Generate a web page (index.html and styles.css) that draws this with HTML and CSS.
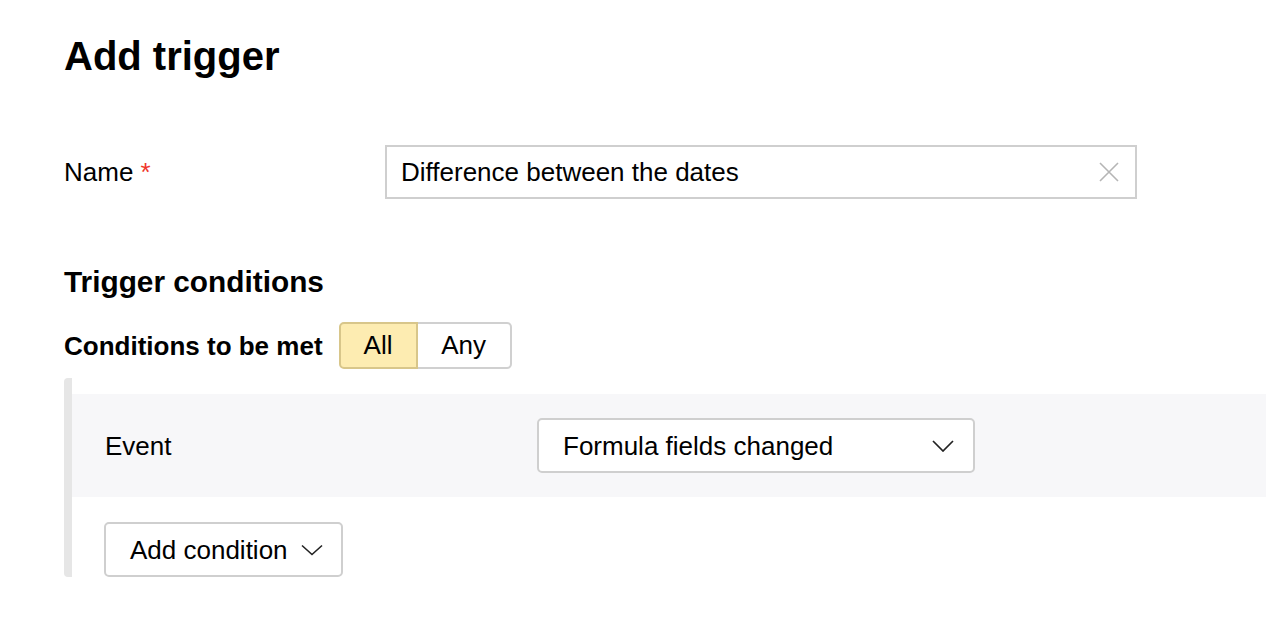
FILE: index.html
```html
<!DOCTYPE html>
<html lang="en">
<head>
<meta charset="utf-8">
<title>Add trigger</title>
<link rel="stylesheet" href="styles.css">
</head>
<body>
<main class="page">
  <h1 class="title">Add trigger</h1>

  <div class="field-row">
    <label class="field-label">Name <span class="required">*</span></label>
    <div class="text-input">
      <span class="text-input__value">Difference between the dates</span>
      <svg class="clear-icon" width="20" height="20" viewBox="0 0 20 20" aria-hidden="true">
        <path d="M1 1 L19 19 M19 1 L1 19" stroke="#b5b5b5" stroke-width="1.6" fill="none"/>
      </svg>
    </div>
  </div>

  <h2 class="section-title">Trigger conditions</h2>

  <div class="match-row">
    <span class="match-label">Conditions to be met</span>
    <div class="segmented">
      <button class="segment segment--all segment--active">All</button>
      <button class="segment segment--any">Any</button>
    </div>
  </div>

  <div class="conditions">
    <div class="condition-row">
      <span class="condition-label">Event</span>
      <div class="select">
        <span class="select__value">Formula fields changed</span>
        <svg class="chevron" width="22" height="12" viewBox="0 0 22 12" aria-hidden="true">
          <path d="M1 1 L11 11 L21 1" stroke="#222" stroke-width="1.7" fill="none"/>
        </svg>
      </div>
    </div>
    <div class="add-row">
      <button class="add-button">
        <span>Add condition</span>
        <svg class="chevron" width="22" height="12" viewBox="0 0 22 12" aria-hidden="true">
          <path d="M1 1.5 L11 10.5 L21 1.5" stroke="#222" stroke-width="1.6" fill="none"/>
        </svg>
      </button>
    </div>
  </div>
</main>
</body>
</html>
```

FILE: styles.css
```css
* {
  box-sizing: border-box;
}

html, body {
  margin: 0;
  padding: 0;
  background: #fff;
}

body {
  font-family: "Liberation Sans", Arial, Helvetica, sans-serif;
  color: #000;
  font-size: 26px;
}

.page {
  padding: 32px 0 0 64px;
}

.title {
  margin: 0;
  font-size: 40px;
  line-height: 48px;
  font-weight: 700;
}

.field-row {
  display: flex;
  align-items: center;
  margin-top: 65px;
}

.field-label {
  width: 321px;
  line-height: 30px;
}

.required {
  color: #f0352b;
}

.text-input {
  width: 752px;
  height: 54px;
  border: 2px solid #cfcfcf;
  display: flex;
  align-items: center;
  padding: 0 16px 0 14px;
  background: #fff;
}

.text-input__value {
  flex: 1;
  line-height: 30px;
}

.clear-icon {
  display: block;
}

.section-title {
  margin: 66px 0 0;
  font-size: 29.8px;
  line-height: 34px;
  font-weight: 700;
}

.match-row {
  display: flex;
  align-items: center;
  gap: 16px;
  margin-top: 23px;
}

.match-label {
  font-weight: 700;
  line-height: 30px;
}

.segmented {
  display: flex;
}

.segment {
  height: 47px;
  font-family: inherit;
  font-size: 26px;
  color: #000;
  background: #fff;
  border: 2px solid #d0d0d0;
  padding: 0;
  text-align: center;
  line-height: 43px;
}

.segment--all {
  width: 79px;
  border-radius: 5px 0 0 5px;
}

.segment--active {
  background: #fdecb1;
  border-color: #d8c68a;
}

.segment--any {
  width: 94px;
  border-left: none;
  border-radius: 0 5px 5px 0;
}

.conditions {
  margin-top: 9px;
  border-left: 8px solid #e6e6e6;
  border-radius: 4px;
  padding-top: 16px;
}

.condition-row {
  display: flex;
  align-items: center;
  background: #f7f7f9;
  padding: 24px 0 24px 33px;
}

.condition-label {
  width: 432px;
  line-height: 30px;
}

.select {
  width: 438px;
  height: 55px;
  background: #fff;
  border: 2px solid #cfcfcf;
  border-radius: 5px;
  display: flex;
  align-items: center;
  padding: 0 19px 0 24px;
}

.select__value {
  flex: 1;
  line-height: 30px;
}

.chevron {
  display: block;
}

.add-row {
  padding: 25px 0 0 32px;
}

.add-button {
  width: 239px;
  height: 55px;
  background: #fff;
  border: 2px solid #cfcfcf;
  border-radius: 5px;
  display: flex;
  align-items: center;
  justify-content: space-between;
  padding: 0 18px 0 24px;
  font-family: inherit;
  font-size: 26px;
  color: #000;
  line-height: 30px;
}
```
